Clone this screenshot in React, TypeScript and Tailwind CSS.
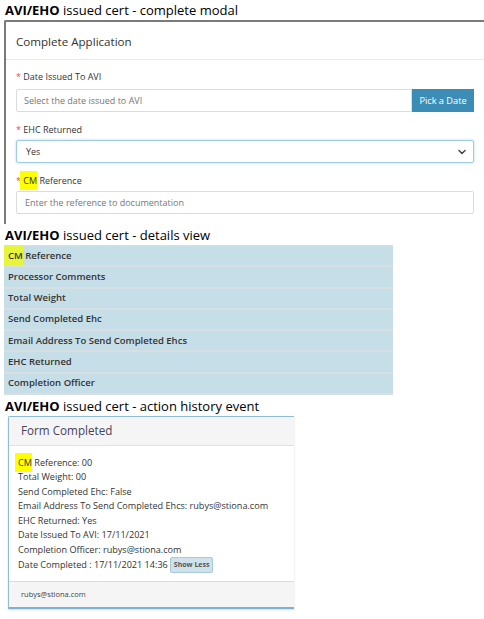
import { ChevronDown } from "lucide-react";

const detailRows = [
  "Processor Comments",
  "Total Weight",
  "Send Completed Ehc",
  "Email Address To Send Completed Ehcs",
  "EHC Returned",
  "Completion Officer",
];

const historyLines = [
  "Total Weight: 00",
  "Send Completed Ehc: False",
  "Email Address To Send Completed Ehcs: rubys@stiona.com",
  "EHC Returned: Yes",
  "Date Issued To AVI: 17/11/2021",
  "Completion Officer: rubys@stiona.com",
];

function Caption({ rest }: { rest: string }) {
  return (
    <div className="pl-[5px] text-[13px] leading-[20px] text-black">
      <span className="font-bold">AVI/EHO</span> {rest}
    </div>
  );
}

export default function App() {
  return (
    <div className="w-[484px] h-[619px] bg-white overflow-hidden font-['Open_Sans',sans-serif] text-[#333]">
      {/* Complete modal */}
      <Caption rest="issued cert - complete modal" />
      <div className="ml-[4px] h-[204px] border-l-2 border-t-2 border-[#7a7a7a] rounded-tl-[2px]">
        <div className="h-[38px] flex items-center pl-[10px] pt-[2px] border-b border-[#e8e8e8] text-[11.6px] text-[#333]">
          Complete Application
        </div>
        <div className="px-[10px] pt-[10px]">
          <div className="text-[9px] leading-[14px]">
            <span className="text-[#d9534f]">*</span> Date Issued To AVI
          </div>
          <div className="mt-[5px] flex h-[23px]">
            <div className="flex-1 border border-[#dcdcdc] rounded-l-[2px] flex items-center pl-[7px] text-[9px] text-[#777]">
              Select the date issued to AVI
            </div>
            <div className="w-[62px] bg-[#3b8db6] text-white text-[9.2px] flex items-center justify-center">
              Pick a Date
            </div>
          </div>
          <div className="mt-[11px] text-[9px] leading-[14px]">
            <span className="text-[#d9534f]">*</span> EHC Returned
          </div>
          <div className="mt-[3px] h-[23px] border border-[#9fcbe3] rounded-[2px] shadow-[0_0_3px_#b9dcef] flex items-center justify-between pl-[9px] pr-[5px] text-[9px] text-[#333]">
            Yes
            <ChevronDown size={12} strokeWidth={3} className="text-[#444]" />
          </div>
          <div className="mt-[9px] text-[9px] leading-[18px]">
            <span className="text-[#d9534f]">*</span>{" "}
            <span className="bg-[#ffff00] py-[3px] -ml-[3px] pl-[3px]">CM</span> Reference
          </div>
          <div className="mt-[1px] h-[23px] border border-[#dcdcdc] rounded-[2px] flex items-center pl-[8px] text-[9px] text-[#777]">
            Enter the reference to documentation
          </div>
        </div>
      </div>

      {/* Details view */}
      <div className="mt-[1px]">
        <Caption rest="issued cert - details view" />
      </div>
      <div className="ml-[4px] w-[389px] bg-[#c6dee8] border-t border-[#d7dfe3] text-[9.5px] font-semibold text-[#333]">
        <div className="h-[21.3px] flex items-center border-b-2 border-[#d7dfe3]">
          <span className="bg-[#e6f53a] h-full flex items-center pl-[4px]">CM</span>
          <span>&nbsp;Reference</span>
        </div>
        {detailRows.map((row) => (
          <div key={row} className="h-[21.3px] flex items-center pl-[4px] border-b-2 border-[#d7dfe3]">
            {row}
          </div>
        ))}
      </div>

      {/* Action history event */}
      <div className="mt-[1px]">
        <Caption rest="issued cert - action history event" />
      </div>
      <div className="ml-[8px] w-[286px] border-l border-t border-[#8fbcd6] border-b-2 border-b-[#7fb2d2] rounded-tl-[2px] shadow-[0_1px_2px_rgba(0,0,0,0.15)]">
        <div className="h-[29px] bg-[#f5f5f5] border-b border-[#e2e2e2] flex items-center pl-[12px] text-[11.7px] text-[#4a4458]">
          Form Completed
        </div>
        <div className="px-[9px] pt-[10px] pb-[8px] text-[9.1px] leading-[14.4px] text-[#333]">
          <div>
            <span className="bg-[#ffff00] py-[3px] -ml-[3px] pl-[3px]">CM</span> Reference: 00
          </div>
          {historyLines.map((line) => (
            <div key={line}>{line}</div>
          ))}
          <div className="flex items-center">
            Date Completed : 17/11/2021 14:36
            <span className="ml-[2px] h-[16px] px-[3px] flex items-center bg-[#cfe2ec] border border-[#a9c9da] rounded-[2px] text-[7px] font-bold text-[#555]">
              Show Less
            </span>
          </div>
        </div>
        <div className="h-[26px] bg-[#f5f5f5] border-t border-[#dcdcdc] flex items-center pl-[12px] text-[7.5px] text-[#444]">
          rubys@stiona.com
        </div>
      </div>
    </div>
  );
}
